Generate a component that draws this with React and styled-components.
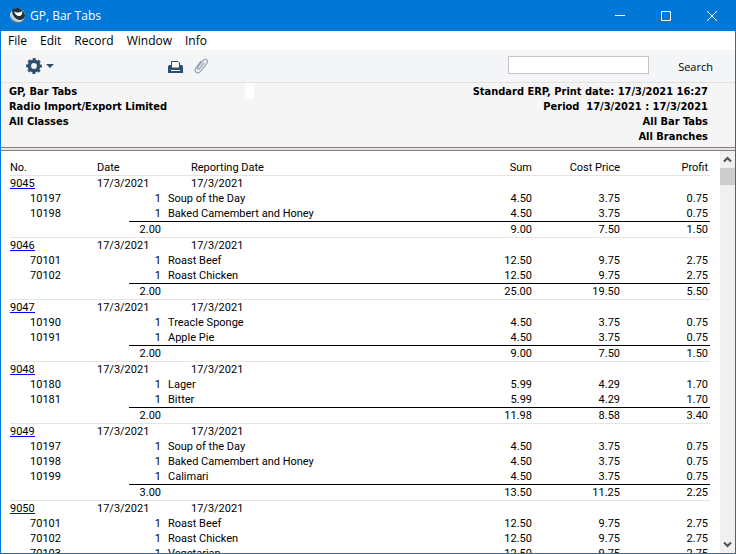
import React, { useState } from "react";
import styled, { createGlobalStyle } from "styled-components";

const GlobalStyle = createGlobalStyle`
  * {
    box-sizing: border-box;
  }
  body {
    margin: 0;
    overflow: hidden;
  }
`;

const uiFont = `"Segoe UI", "Noto Sans", sans-serif`;
const reportFont = `Roboto, "Noto Sans", sans-serif`;
const boldFont = `"DejaVu Sans Condensed", "DejaVu Sans", sans-serif`;

const Window = styled.div`
  display: flex;
  flex-direction: column;
  height: 100vh;
  border: 1px solid #0078d7;
  border-top: 0;
  background: #fff;
  color: #000;
  font: 12px ${uiFont};
`;

const TitleBar = styled.header`
  display: flex;
  align-items: center;
  flex: none;
  height: 31px;
  padding-left: 8px;
  background: #0078d7;
  color: #fff;
`;

const Title = styled.h1`
  flex: 1;
  margin: 0 0 0 4px;
  font: 12px "Open Sans", sans-serif;
`;

const CaptionButton = styled.button`
  display: flex;
  align-items: center;
  justify-content: center;
  width: 46px;
  height: 31px;
  padding: 0;
  border: 0;
  background: none;
  color: #fff;
`;

const MenuBar = styled.nav`
  display: flex;
  flex: none;
  gap: 13px;
  height: 19px;
  padding-left: 7px;
`;

const MenuItem = styled.button`
  padding: 0;
  border: 0;
  background: none;
  color: #000;
  font: 12px/20px "Open Sans", sans-serif;
`;

const Toolbar = styled.div`
  display: flex;
  align-items: center;
  flex: none;
  height: 33px;
  padding: 0 22px 0 25px;
  border-bottom: 1px solid #dfe1e5;
  background: #f4f5f7;
`;

const ToolButton = styled.button`
  display: flex;
  align-items: center;
  gap: 4px;
  padding: 0;
  margin-right: ${props => props.$gap || 0}px;
  border: 0;
  background: none;
  color: #2f4f6f;
`;

const Search = styled.label`
  display: flex;
  align-items: center;
  flex-direction: row-reverse;
  gap: 29px;
  margin-left: auto;
  font: 11px "Open Sans", sans-serif;
`;

const SearchBox = styled.input`
  width: 141px;
  height: 18px;
  padding: 0 4px;
  margin-bottom: 2px;
  border: 1px solid #c4c4c8;
  background: #fff;
  font: 11px ${uiFont};
`;

const ReportHeader = styled.section`
  display: flex;
  justify-content: space-between;
  flex: none;
  height: 64px;
  padding: 0 27px 0 8px;
  background: #f5f5f5;
  font: bold 11px/15px ${boldFont};
`;

const HeaderBlock = styled.div`
  padding-top: 1px;
  text-align: ${props => props.$align || "left"};
  white-space: pre;
`;

const LeftSide = styled.div`
  display: flex;
  width: 245px;
  justify-content: space-between;
`;

const Marker = styled.span`
  width: 9px;
  height: 16px;
  background: #fff;
`;

const Splitter = styled.div`
  flex: none;
  height: 4px;
  border: solid #808080;
  border-width: 1px 0;
  background: #ece4e0;
`;

const Body = styled.main`
  display: flex;
  flex: 1;
  min-height: 0;
`;

const ReportArea = styled.div`
  flex: 1;
  overflow: hidden;
  padding: 9px 10px 0 9px;
`;

const Report = styled.table`
  width: 100%;
  table-layout: fixed;
  border-spacing: 0;
  font: 11px/15px ${reportFont};
`;

const Cell = styled.td`
  height: 15px;
  padding: 0;
  padding-right: ${props => props.$pad || 0}px;
  border-top: ${props => (props.$line ? `1px solid ${props.$line}` : "0")};
  text-align: ${props => (props.$right ? "right" : "left")};
  font-weight: normal;
  white-space: nowrap;
`;

const ItemName = styled.span`
  padding-left: 7px;
`;

const TabLink = styled.a`
  display: inline-block;
  height: 13px;
  border-bottom: 1px solid #0000ff;
  color: #000;
  line-height: 15px;
  text-decoration: none;
  vertical-align: top;
`;

const ScrollBar = styled.div`
  display: flex;
  flex-direction: column;
  width: 15px;
  background: #f0f0f0;
`;

const ScrollButton = styled.button`
  display: flex;
  align-items: center;
  justify-content: center;
  height: 17px;
  padding: 0;
  border: 0;
  background: none;
  color: #505050;
`;

const Track = styled.div`
  flex: 1;
`;

const Thumb = styled.div`
  height: 17px;
  background: #cdcdcd;
`;

const light = "#ece2df";
const date = "17/3/2021";

const soup = ["10197", "Soup of the Day", "4.50", "3.75", "0.75"];
const camembert = ["10198", "Baked Camembert and Honey", "4.50", "3.75", "0.75"];
const beef = ["70101", "Roast Beef", "12.50", "9.75", "2.75"];
const chicken = ["70102", "Roast Chicken", "12.50", "9.75", "2.75"];

const tabs = [
  { no: "9045", items: [soup, camembert], total: ["2.00", "9.00", "7.50", "1.50"] },
  { no: "9046", items: [beef, chicken], total: ["2.00", "25.00", "19.50", "5.50"] },
  {
    no: "9047",
    items: [
      ["10190", "Treacle Sponge", "4.50", "3.75", "0.75"],
      ["10191", "Apple Pie", "4.50", "3.75", "0.75"]
    ],
    total: ["2.00", "9.00", "7.50", "1.50"]
  },
  {
    no: "9048",
    items: [
      ["10180", "Lager", "5.99", "4.29", "1.70"],
      ["10181", "Bitter", "5.99", "4.29", "1.70"]
    ],
    total: ["2.00", "11.98", "8.58", "3.40"]
  },
  {
    no: "9049",
    items: [soup, camembert, ["10199", "Calimari", "4.50", "3.75", "0.75"]],
    total: ["3.00", "13.50", "11.25", "2.25"]
  },
  {
    no: "9050",
    items: [beef, chicken, ["70103", "Vegetarian", "12.50", "9.75", "2.75"]]
  }
];

const Logo = () => (
  <svg width="17" height="17" viewBox="0 0 17 17">
    <circle cx="8.5" cy="8.5" r="7.5" fill="#c9d3d9" />
    <path d="M3 3c2-2 7-3 10 0 2 2 3 4 3 6-1 3-3 4-6 4-4-1-7-5-7-10z" fill="#1f3442" />
    <path d="M5 4c2 2 5 2 8 0 1 3-1 5-3 5S5.500 7 5 4z" fill="#fff" />
    <path d="M2 9c1 4 4 6 8 6 2 0 4-1 5-3-1 3-4 4.500-7 4.500S2 13 2 9z" fill="#54707f" />
  </svg>
);

const Gear = () => (
  <svg width="16" height="16" viewBox="0 0 16 16" fill="none" stroke="currentColor">
    <circle cx="8" cy="8" r="4.700" strokeWidth="3.600" />
    <circle cx="8" cy="8" r="6.800" strokeWidth="2.200" strokeDasharray="3 2.340" strokeDashoffset="1.500" />
  </svg>
);

const Printer = () => (
  <svg width="15" height="13" viewBox="0 0 15 13">
    <path d="M3.500 8V1.500h6.500l1.500 1.500V8" fill="#fff" stroke="currentColor" />
    <path d="M1 5h2v2.500h9V5h2l1 1.500V13H0V6.500z" fill="currentColor" />
    <path d="M3 10h9v1H3z" fill="#fff" />
  </svg>
);

const Clip = () => (
  <svg width="15" height="16" viewBox="0 0 15 16" fill="none" stroke="#98a5b3" strokeWidth="1.300">
    <path d="M10.300 4.600 5.600 10.500c-1.200 1.500-3 .1-1.800-1.400L9 2.600c2.300-2.800 6-.2 3.800 2.800l-6.300 8C3.800 16.800-.8 13.500 1.900 9.900L7.300 3" />
  </svg>
);

const Chevron = ({ up }) => (
  <svg width="9" height="7" viewBox="0 0 9 7" fill="none" stroke="currentColor" strokeWidth="2">
    <path d={up ? "M1 5.500 4.500 2 8 5.500" : "M1 1.500 4.500 5 8 1.500"} />
  </svg>
);

const TabRows = ({ tab }) => (
  <tbody>
    <tr>
      <Cell colSpan={2} $line={light}>
        <TabLink href={`#${tab.no}`}>{tab.no}</TabLink>
      </Cell>
      <Cell colSpan={3} $line={light}>{date}</Cell>
      <Cell $line={light}>{date}</Cell>
      <Cell colSpan={3} $line={light} />
    </tr>
    {tab.items.map(([code, name, sum, cost, profit]) => (
      <tr key={code}>
        <Cell $right>{code}</Cell>
        <Cell colSpan={3} $right>1</Cell>
        <Cell colSpan={2}>
          <ItemName>{name}</ItemName>
        </Cell>
        <Cell $right $pad={2}>{sum}</Cell>
        <Cell $right $pad={2}>{cost}</Cell>
        <Cell $right $pad={2}>{profit}</Cell>
      </tr>
    ))}
    {tab.total && (
      <tr>
        <Cell colSpan={3} />
        <Cell $right $line="#000">{tab.total[0]}</Cell>
        <Cell colSpan={2} $line="#000" />
        <Cell $right $pad={2} $line="#000">{tab.total[1]}</Cell>
        <Cell $right $pad={2} $line="#000">{tab.total[2]}</Cell>
        <Cell $right $pad={2} $line="#000">{tab.total[3]}</Cell>
      </tr>
    )}
  </tbody>
);

const App = () => {
  const [query, setQuery] = useState("");

  return (
    <>
      <GlobalStyle />
      <Window>
        <TitleBar>
          <Logo />
          <Title>GP, Bar Tabs</Title>
          <CaptionButton aria-label="Minimize">
            <svg width="10" height="10">
              <path d="M0 4.500h10" stroke="currentColor" />
            </svg>
          </CaptionButton>
          <CaptionButton aria-label="Maximize">
            <svg width="10" height="10">
              <path d="M.5.5h9v9h-9z" fill="none" stroke="currentColor" />
            </svg>
          </CaptionButton>
          <CaptionButton aria-label="Close">
            <svg width="10" height="10">
              <path d="M0 0l10 10M10 0 0 10" stroke="currentColor" />
            </svg>
          </CaptionButton>
        </TitleBar>
        <MenuBar>
          {["File", "Edit", "Record", "Window", "Info"].map(item => (
            <MenuItem key={item}>{item}</MenuItem>
          ))}
        </MenuBar>
        <Toolbar>
          <ToolButton aria-label="Settings" $gap={114}>
            <Gear />
            <svg width="8" height="4">
              <path d="M0 0h8L4 4z" fill="currentColor" />
            </svg>
          </ToolButton>
          <ToolButton aria-label="Print" $gap={11}>
            <Printer />
          </ToolButton>
          <ToolButton aria-label="Attachments">
            <Clip />
          </ToolButton>
          <Search>
            Search
            <SearchBox value={query} onChange={e => setQuery(e.target.value)} />
          </Search>
        </Toolbar>
        <ReportHeader>
          <LeftSide>
            <HeaderBlock>
              <div>GP, Bar Tabs</div>
              <div>Radio Import/Export Limited</div>
              <div>All Classes</div>
            </HeaderBlock>
            <Marker />
          </LeftSide>
          <HeaderBlock $align="right">
            <div>Standard ERP, Print date: 17/3/2021 16:27</div>
            <div>{"Period  17/3/2021 : 17/3/2021"}</div>
            <div>All Bar Tabs</div>
            <div>All Branches</div>
          </HeaderBlock>
        </ReportHeader>
        <Splitter />
        <Body>
          <ReportArea>
            <Report>
              <colgroup>
                <col width="51" />
                <col width="36" />
                <col width="32" />
                <col width="32" />
                <col width="30" />
                <col />
                <col width="88" />
                <col width="88" />
                <col width="88" />
              </colgroup>
              <thead>
                <tr>
                  <Cell as="th" colSpan={2}>No.</Cell>
                  <Cell as="th" colSpan={3}>Date</Cell>
                  <Cell as="th">Reporting Date</Cell>
                  <Cell as="th" $right $pad={2}>Sum</Cell>
                  <Cell as="th" $right $pad={2}>Cost Price</Cell>
                  <Cell as="th" $right $pad={2}>Profit</Cell>
                </tr>
              </thead>
              {tabs.map(tab => (
                <TabRows key={tab.no} tab={tab} />
              ))}
            </Report>
          </ReportArea>
          <ScrollBar>
            <ScrollButton aria-label="Scroll up">
              <Chevron up />
            </ScrollButton>
            <Track>
              <Thumb />
            </Track>
            <ScrollButton aria-label="Scroll down">
              <Chevron />
            </ScrollButton>
          </ScrollBar>
        </Body>
      </Window>
    </>
  );
};

export default App;
